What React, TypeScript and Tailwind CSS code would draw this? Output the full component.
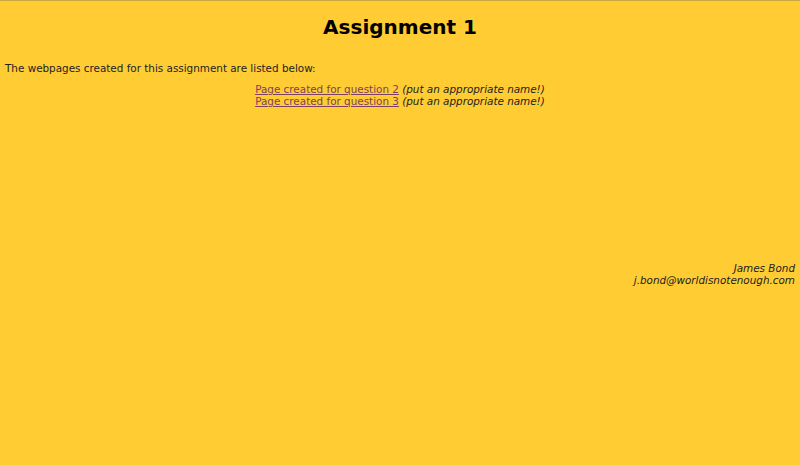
export default function App() {
  return (
    <div
      className="min-h-[465px] border-t border-[#c9a840] bg-[#ffcc33] text-[10.4px] leading-[12px] text-[#222]"
      style={{ fontFamily: '"DejaVu Sans", Verdana, sans-serif' }}
    >
      <h1 className="pt-[13px] text-center text-[20px] font-bold leading-[26px] text-black">Assignment 1</h1>
      <p className="mt-[22px] px-[5px]">The webpages created for this assignment are listed below:</p>
      <div className="mt-[9px] text-center">
        <div>
          <a href="#" className="text-[#7d3f62] underline">Page created for question 2</a>{' '}
          <i>(put an appropriate name!)</i>
        </div>
        <div>
          <a href="#" className="text-[#7d3f62] underline">Page created for question 3</a>{' '}
          <i>(put an appropriate name!)</i>
        </div>
      </div>
      <div className="mt-[155px] px-[5px] text-right italic">
        <div>James Bond</div>
        <div>j.bond@worldisnotenough.com</div>
      </div>
    </div>
  );
}
